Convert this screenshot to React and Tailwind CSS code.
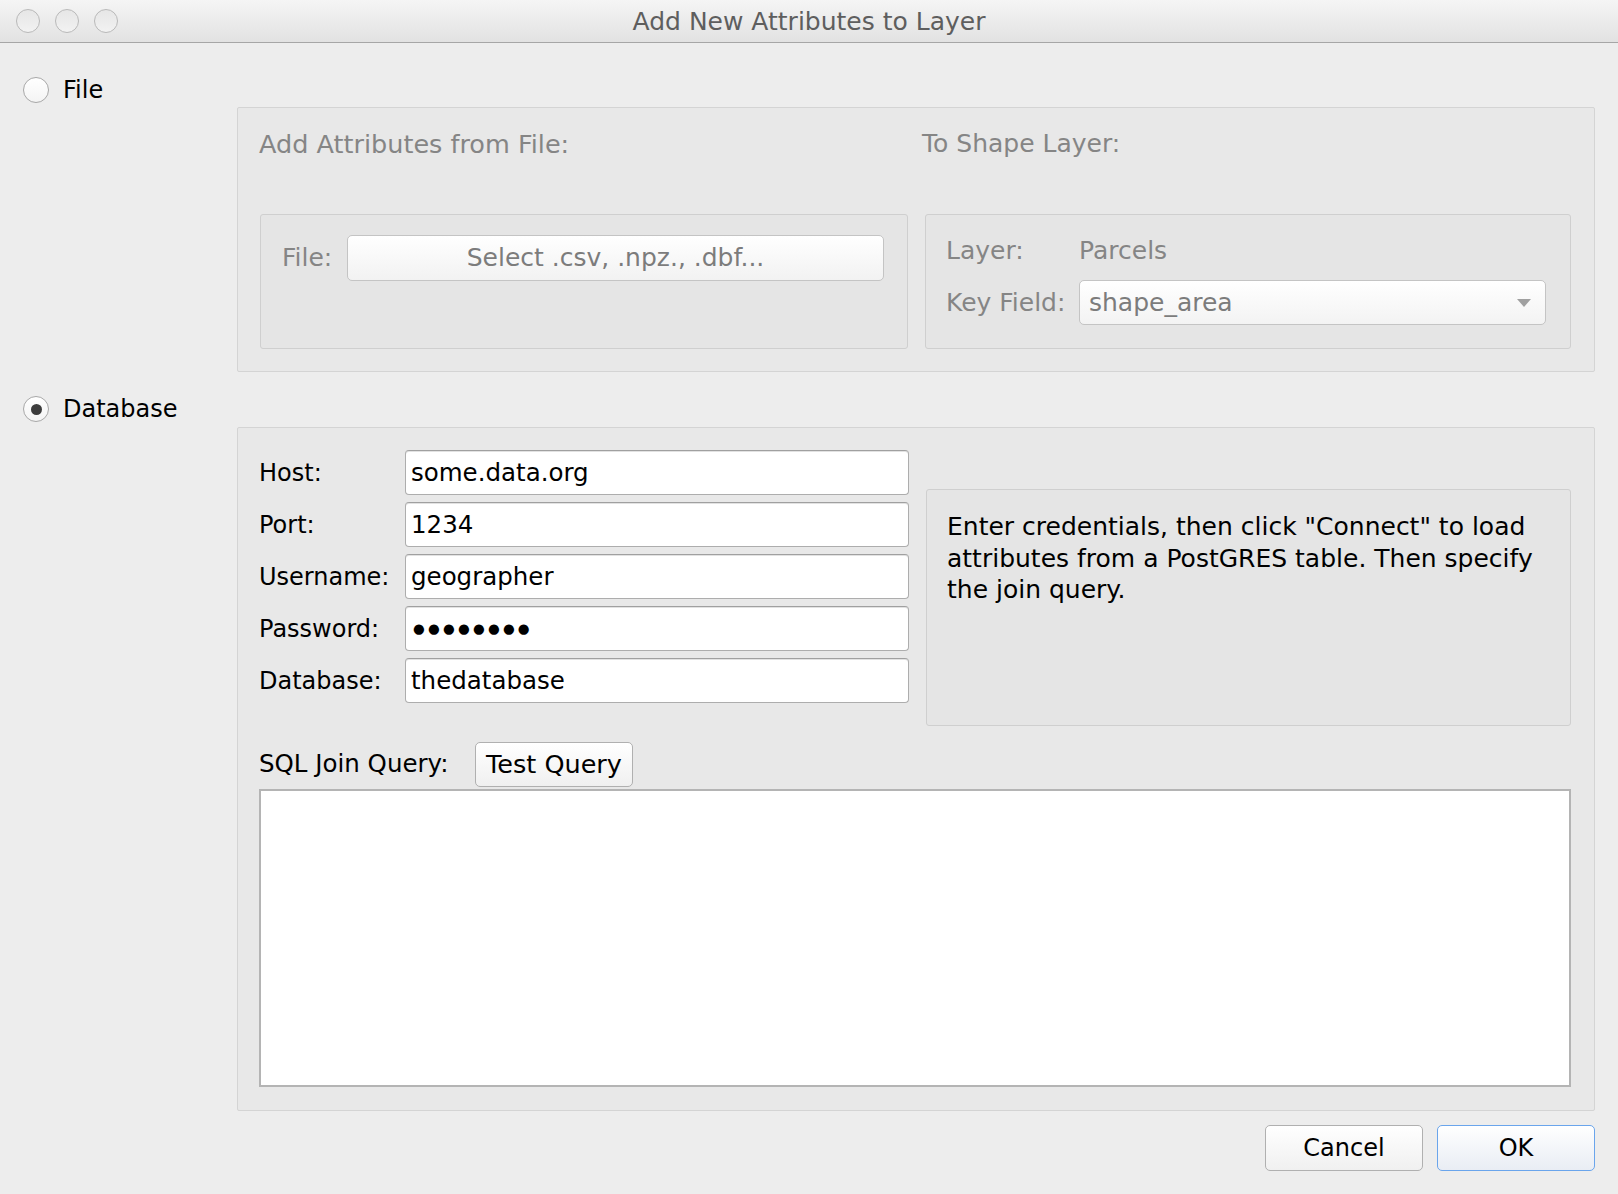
export default function App() {
  return (
    <div className="w-[1618px] h-[1194px] bg-[#ededed] font-['DejaVu_Sans',sans-serif] text-[24px] text-black flex flex-col overflow-hidden">
      {/* Title bar */}
      <div className="h-[43px] shrink-0 border-b border-[#a6a6a6] bg-gradient-to-b from-[#f5f5f5] to-[#e2e2e2] grid grid-cols-[1fr_auto_1fr] items-center">
        <div className="flex items-center gap-[15px] pl-[16px]">
          <div className="w-[24px] h-[24px] rounded-full border-[1.5px] border-[#b9b9b9] bg-gradient-to-b from-[#e6e6e6] to-[#f2f2f2]"></div>
          <div className="w-[24px] h-[24px] rounded-full border-[1.5px] border-[#b9b9b9] bg-gradient-to-b from-[#e6e6e6] to-[#f2f2f2]"></div>
          <div className="w-[24px] h-[24px] rounded-full border-[1.5px] border-[#b9b9b9] bg-gradient-to-b from-[#e6e6e6] to-[#f2f2f2]"></div>
        </div>
        <div className="text-[25px] leading-none text-[#5e5e5e]">Add New Attributes to Layer</div>
        <div></div>
      </div>

      {/* File radio */}
      <div className="mt-[34px] ml-[23px] flex items-center h-[26px]">
        <div className="w-[26px] h-[26px] rounded-full border border-[#a8a8a8] bg-gradient-to-b from-white to-[#f4f4f4]"></div>
        <span className="ml-[14px] leading-none">File</span>
      </div>

      {/* File panel */}
      <div className="mt-[4px] ml-[237px] mr-[23px] h-[265px] shrink-0 border border-[#d4d4d4] bg-[#e8e8e8] rounded-[2px] text-[#858585] text-[25px]">
        <div className="flex pt-[21px] pl-[21px] leading-[30px]">
          <div className="w-[663px] text-[25.5px]">Add Attributes from File:</div>
          <div>To Shape Layer:</div>
        </div>
        <div className="mt-[55px] flex gap-[17px] pl-[22px] pr-[23px]">
          <div className="w-[648px] h-[135px] border border-[#cfcfcf] bg-[#e5e5e5] rounded-[3px] pt-[20px] pl-[21px] flex items-start">
            <div className="w-[65px] h-[46px] flex items-center">File:</div>
            <div className="w-[537px] h-[46px] rounded-[5px] border border-[#c4c4c4] bg-gradient-to-b from-white to-[#f2f2f2] flex items-center justify-center text-[#7c7c7c]">
              Select .csv, .npz., .dbf...
            </div>
          </div>
          <div className="flex-1 h-[135px] border border-[#cfcfcf] bg-[#e5e5e5] rounded-[3px] pt-[21px] pl-[20px] flex flex-col">
            <div className="flex h-[30px] items-center">
              <div className="w-[133px]">Layer:</div>
              <div>Parcels</div>
            </div>
            <div className="flex mt-[14px] items-center">
              <div className="w-[133px]">Key Field:</div>
              <div className="w-[467px] h-[45px] rounded-[5px] border border-[#c4c4c4] bg-gradient-to-b from-white to-[#f3f3f3] flex items-center justify-between pl-[9px] pr-[14px] text-[#7c7c7c]">
                <span>shape_area</span>
                <svg width="14" height="8" viewBox="0 0 14 8">
                  <polygon points="0,0 14,0 7,8" fill="#a0a0a0" />
                </svg>
              </div>
            </div>
          </div>
        </div>
      </div>

      {/* Database radio */}
      <div className="mt-[24px] ml-[23px] flex items-center h-[26px]">
        <div className="w-[26px] h-[26px] rounded-full border border-[#a8a8a8] bg-gradient-to-b from-white to-[#f4f4f4] flex items-center justify-center">
          <div className="w-[11px] h-[11px] rounded-full bg-[#3c3c3c]"></div>
        </div>
        <span className="ml-[14px] leading-none">Database</span>
      </div>

      {/* Database panel */}
      <div className="mt-[5px] ml-[237px] mr-[23px] h-[684px] shrink-0 border border-[#d4d4d4] bg-[#e8e8e8] rounded-[2px] pt-[22px] pl-[21px] pr-[23px] pb-[23px] flex flex-col">
        <div className="flex h-[276px]">
          <div className="flex flex-col gap-[7px]">
            {[
              ["Host:", "some.data.org"],
              ["Port:", "1234"],
              ["Username:", "geographer"],
              ["Password:", "●●●●●●●●"],
              ["Database:", "thedatabase"],
            ].map(([label, value]) => (
              <div key={label} className="flex items-center">
                <div className="w-[146px]">{label}</div>
                <div className="w-[504px] h-[45px] rounded-[4px] border border-[#adadad] border-t-[#a0a0a0] bg-white flex items-center pl-[5px] pt-[1px] shadow-[inset_0_1px_0_#e2e2e2]">
                  {label === "Password:" ? (
                    <span className="text-[13.5px] leading-none tracking-[3.2px] pl-[2px]">{value}</span>
                  ) : (
                    <span className="text-[24.5px]">{value}</span>
                  )}
                </div>
              </div>
            ))}
          </div>
          <div className="ml-[17px] mt-[39px] h-[237px] flex-1 border border-[#cfcfcf] bg-[#e5e5e5] rounded-[3px] pt-[21px] pl-[20px] pr-[20px] text-[25px] leading-[31.5px]">
            Enter credentials, then click "Connect" to load attributes from a PostGRES table. Then specify the join query.
          </div>
        </div>
        <div className="mt-[16px] flex items-center h-[45px]">
          <div className="w-[216px] text-[24.5px]">SQL Join Query:</div>
          <div className="w-[158px] h-[45px] rounded-[5px] border border-[#b0b0b0] bg-gradient-to-b from-white to-[#f0f0f0] flex items-center justify-center text-[25.5px]">
            Test Query
          </div>
        </div>
        <div className="mt-[2px] h-[298px] border-2 border-[#b4b4b4] bg-white"></div>
      </div>

      {/* Buttons */}
      <div className="mt-[14px] mr-[23px] flex justify-end gap-[14px]">
        <div className="w-[158px] h-[46px] rounded-[5px] border border-[#b0b0b0] bg-gradient-to-b from-white to-[#f0f0f0] flex items-center justify-center">
          Cancel
        </div>
        <div className="w-[158px] h-[46px] rounded-[5px] border border-[#6aa5ec] bg-gradient-to-b from-white to-[#e9edf4] flex items-center justify-center">
          OK
        </div>
      </div>
    </div>
  );
}
